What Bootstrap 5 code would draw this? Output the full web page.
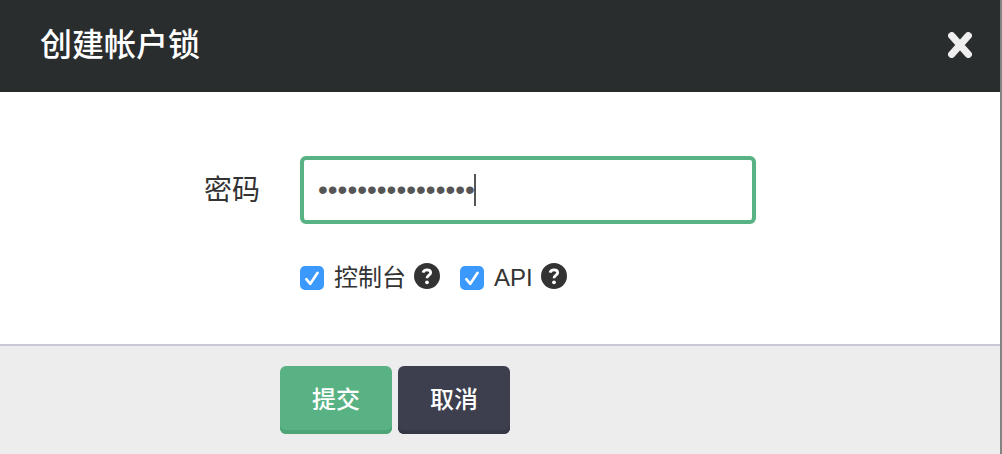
<!DOCTYPE html>
<html lang="zh-CN">
<head>
<meta charset="utf-8">
<meta name="viewport" content="width=device-width, initial-scale=1">
<title>创建帐户锁</title>
<link href="https://cdn.jsdelivr.net/npm/bootstrap@5.3.0/dist/css/bootstrap.min.css" rel="stylesheet">
<style>
  body { background: #828282; color: #333; font-family: "Liberation Sans", "Noto Sans CJK SC", sans-serif; font-size: 24px; line-height: 32px; }
  .lock-dialog { margin-right: 2px; background: #fff; }
  .lock-head { background: #2a2d2e; color: #fff; padding: 20px 28px 20px 40px; border-bottom: 2px solid #282b2c; }
  .lock-title { font-size: 32px; line-height: 50px; font-weight: 500; }
  .lock-close { width: 24px; height: 26px; color: #eee; line-height: 0; }
  .lock-form { padding: 64px 0 50px; }
  .field-name { width: 260px; padding-top: 2px; font-size: 28px; }
  .field-area { margin-left: 40px; width: 456px; }
  .checks { margin-left: 300px; margin-top: 36px; column-gap: 20px; }
  .checks label { padding-top: 2px; }
  .pass-input, .pass-input:focus { height: 68px; padding: 0 14px; border: 4px solid #58b283; border-radius: 6px; color: #555; font-family: "Liberation Sans", sans-serif; font-size: 28px; box-shadow: none; }
  .caret-bar { position: absolute; left: 174px; top: 18px; width: 2px; height: 32px; background: #555; }
  .lock-check.form-check-input { width: 24px; height: 24px; margin: 2px 10px 0 0; border: 0; border-radius: 5px; }
  .lock-check.form-check-input:checked { background-color: #3b99fc; background-size: 24px 24px; background-image: url("data:image/svg+xml,%3csvg xmlns='http://www.w3.org/2000/svg' viewBox='0 0 24 24'%3e%3cpath fill='none' stroke='%23fff' stroke-width='2.6' stroke-linecap='round' stroke-linejoin='round' d='M6.3 13.2l4 4.6L17.6 6.8'/%3e%3c/svg%3e"); }
  .hint { width: 26px; height: 26px; margin: 0 0 2px 8px; }
  .lock-foot { background: #ededed; border-top: 2px solid #cac8d8; padding: 20px 0 20px 280px; gap: 6px; }
  .lock-btn.btn { width: 112px; height: 68px; padding: 0; border: 0; border-radius: 6px; font-size: 24px; font-weight: 500; color: #fff; }
  .send-btn.btn, .send-btn.btn:hover { background: #58b283; box-shadow: inset 0 -4px #4ea575; }
  .drop-btn.btn, .drop-btn.btn:hover { background: #3d3f4e; box-shadow: inset 0 -4px #353745; }
</style>
</head>
<body>
<form class="lock-dialog min-vh-100 d-flex flex-column">
  <header class="lock-head d-flex align-items-center justify-content-between">
    <h1 class="lock-title m-0">创建帐户锁</h1>
    <button type="button" class="lock-close btn p-0 border-0" aria-label="关闭">
      <svg width="24" height="26" viewBox="0 0 24 26" fill="none" stroke="currentColor" stroke-width="7.2" stroke-linecap="round"><path d="M3.7 3.7l16.6 18.6M20.3 3.7L3.7 22.3"/></svg>
    </button>
  </header>
  <main class="lock-form flex-grow-1">
    <div class="d-flex align-items-center">
      <label for="pass" class="field-name text-end flex-shrink-0">密码</label>
      <div class="field-area position-relative">
        <input id="pass" type="password" class="pass-input form-control" value="abcdefghijklmnop">
        <span class="caret-bar"></span>
      </div>
    </div>
    <div class="checks d-flex flex-wrap">
      <div class="d-flex align-items-center">
        <input id="console" type="checkbox" class="lock-check form-check-input flex-shrink-0" checked>
        <label for="console">控制台</label>
        <svg class="hint" viewBox="0 0 26 26"><circle cx="13" cy="13" r="13" fill="#333"/><path d="M9 9.6C9.5 7.7 11 6.8 13 6.8c2.2 0 3.7 1.1 3.7 2.9 0 2.5-3.7 2.5-3.7 5.6" fill="none" stroke="#fff" stroke-width="2.8"/><circle cx="13" cy="19.3" r="1.9" fill="#fff"/></svg>
      </div>
      <div class="d-flex align-items-center">
        <input id="api" type="checkbox" class="lock-check form-check-input flex-shrink-0" checked>
        <label for="api">API</label>
        <svg class="hint" viewBox="0 0 26 26"><circle cx="13" cy="13" r="13" fill="#333"/><path d="M9 9.6C9.5 7.7 11 6.8 13 6.8c2.2 0 3.7 1.1 3.7 2.9 0 2.5-3.7 2.5-3.7 5.6" fill="none" stroke="#fff" stroke-width="2.8"/><circle cx="13" cy="19.3" r="1.9" fill="#fff"/></svg>
      </div>
    </div>
  </main>
  <footer class="lock-foot d-flex">
    <button type="submit" class="lock-btn send-btn btn">提交</button>
    <button type="button" class="lock-btn drop-btn btn">取消</button>
  </footer>
</form>
<script src="https://cdn.jsdelivr.net/npm/bootstrap@5.3.0/dist/js/bootstrap.bundle.min.js"></script>
</body>
</html>
